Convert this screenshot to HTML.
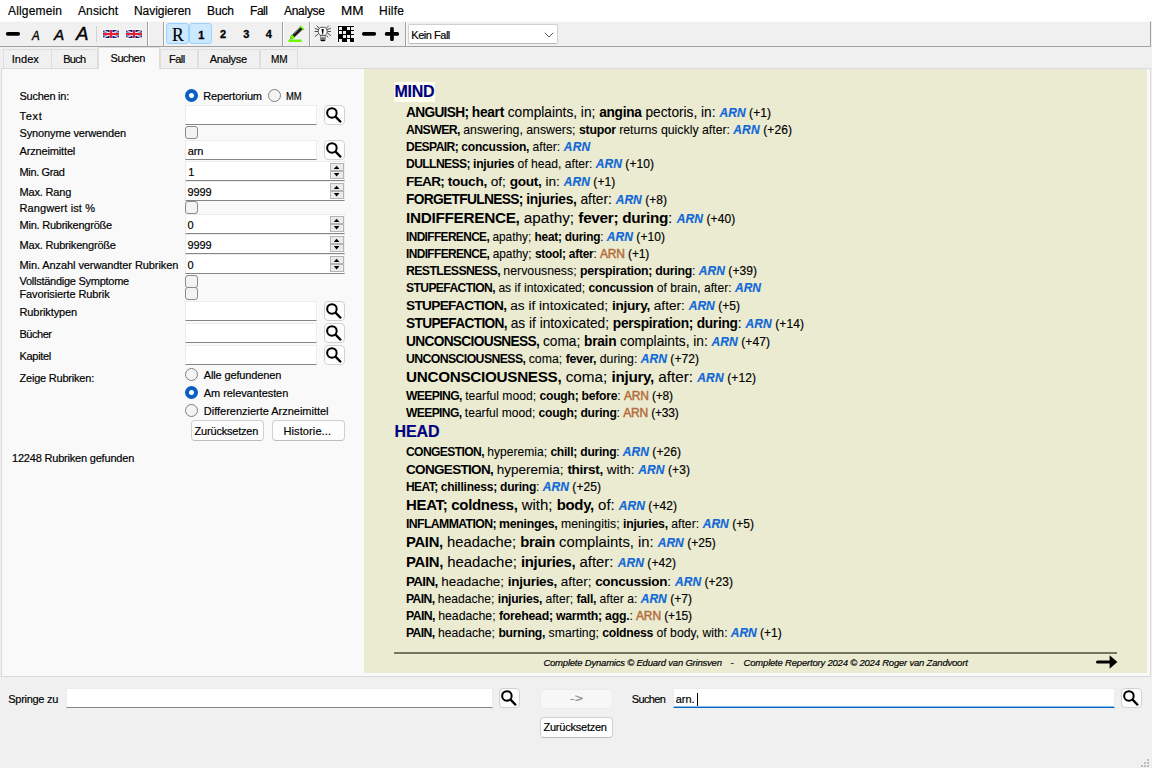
<!DOCTYPE html>
<html lang="de"><head><meta charset="utf-8"><title>Complete Dynamics</title>
<style>
*{box-sizing:border-box;margin:0;padding:0}
html,body{width:1152px;height:768px;overflow:hidden;background:#f0f0f0}
body{position:relative;font-family:"Liberation Sans",sans-serif;font-size:11px;color:#000}
div,span,svg{position:absolute}
b{font-weight:bold}
.t{white-space:pre;line-height:20px;height:20px;z-index:5;transform-origin:0 50%;-webkit-text-stroke:0.18px currentColor}
.t span,.t b{position:static}
.u{letter-spacing:-.045em}
.r{-webkit-text-stroke:0.08px currentColor}
.r b{letter-spacing:-.02em;-webkit-text-stroke:0}
.r .u{letter-spacing:-.05em}
#menu{left:0;top:0;width:1152px;height:21px;background:#fff}
#tb{left:0;top:21px;width:1151px;height:26px;background:#f0f0f0;border-bottom:1px solid #a0a0a0;border-right:1px solid #a0a0a0;border-top:1px solid #fafafa}
.vs{width:1px;background:#a0a0a0;top:22px;height:24px}
.vs2{width:1px;background:#fff;top:22px;height:24px}
.ls{width:1px;background:#d2d2d2;top:26px;height:16px}
.hb{top:23px;height:21px;width:22px;background:#cce8ff;border:1px solid #9ad2ff;border-radius:3px}
.bar{background:#000;border-radius:2px}
.fl{top:30px;width:16px;height:8px;border-radius:1.5px;overflow:hidden;box-shadow:0 0 0 1px #fafaf6}
#combo{left:408px;top:24px;width:149.5px;height:20px;background:#fff;border:1px solid #d0d0d0;border-bottom-color:#b8b8b8;border-radius:2px}
.tab{top:49px;height:19px;background:#f0f0f0;border:1px solid #dedede;border-bottom:none}
.tab.sel{top:47px;height:22px;background:#f9f9f9;z-index:3}
#pane{left:1px;top:68px;width:1149.5px;height:609px;background:#f9f9f9;border:1px solid #dadada}
#rp{left:364px;top:69px;width:783px;height:603.5px;background:#ebebd2}
#hl{left:394px;top:82px;width:41px;height:20px;background:#fffff0}
#hr{left:394px;top:652px;width:723px;height:2px;background:#74745f}
.in{background:#fff;border:1px solid #ececec;border-bottom:1px solid #868686}
.inf{background:#fff;border:1px solid #ececec;border-bottom:1px solid #0067c0;box-shadow:inset 0 -1px 0 #8fbbe4}
.sb{width:21px;height:20px;background:#fdfdfd;border:1px solid #d2d2d2;border-radius:4px}
.sb svg{left:-1px;top:-1px}
.spin{left:185px;width:160px;height:20px;background:#fff;border:1px solid #ececec;border-bottom:1px solid #868686}
.sa{left:144px;width:14px;height:8px;background:#ebebeb;border:1px solid #b4b4b4}
.sa svg{left:-1px;top:-1px}
.rd{width:13px;height:13px;border-radius:50%;border:1px solid #808080;background:#f4f4f4}
.rd.on{border:4px solid #0a5fc2;background:#fff}
.ck{width:13px;height:13px;border-radius:3px;border:1px solid #8a8a8a;background:#f3f3f3}
.btn{background:#fdfdfd;border:1px solid #d0d0d0;border-bottom-color:#bcbcbc;border-radius:4px}
.btnd{background:#f7f7f7;border:1px solid #ececec;border-radius:4px}
</style></head>
<body>
<div id="menu"></div>
<div id="tb"></div>
<svg width="410" height="26" viewBox="0 0 410 26" style="left:0;top:21px"><rect x="5.9" y="11.1" width="14.1" height="3.7" rx="1.7" fill="#000"/><rect x="362" y="11.1" width="14.1" height="3.7" rx="1.7" fill="#000"/><rect x="384.9" y="11.1" width="14.1" height="3.7" rx="1.5" fill="#000"/><rect x="390.1" y="6" width="3.7" height="14" rx="1.5" fill="#000"/></svg>
<div class="ls" style="left:96px"></div>
<div class="fl" style="left:103px"><svg width="16" height="8" viewBox="0 0 60 30" preserveAspectRatio="none"><rect width="60" height="30" fill="#00207f"/><path d="M0 0 L60 30 M60 0 L0 30" stroke="#fff" stroke-width="5"/><path d="M0 0 L60 30 M60 0 L0 30" stroke="#e0344c" stroke-width="1.8"/><path d="M30 0 V30 M0 15 H60" stroke="#fff" stroke-width="10.5"/><path d="M30 0 V30" stroke="#e2203a" stroke-width="7.6"/><path d="M0 15 H60" stroke="#e2203a" stroke-width="7.6"/></svg></div>
<div class="fl" style="left:126px"><svg width="16" height="8" viewBox="0 0 60 30" preserveAspectRatio="none"><rect width="60" height="30" fill="#00207f"/><path d="M0 0 L60 30 M60 0 L0 30" stroke="#fff" stroke-width="5"/><path d="M0 0 L60 30 M60 0 L0 30" stroke="#e0344c" stroke-width="1.8"/><path d="M30 0 V30 M0 15 H60" stroke="#fff" stroke-width="10.5"/><path d="M30 0 V30" stroke="#e2203a" stroke-width="7.6"/><path d="M0 15 H60" stroke="#e2203a" stroke-width="7.6"/></svg></div>
<div class="vs" style="left:147px"></div><div class="vs2" style="left:148px"></div>
<div class="vs" style="left:163px"></div><div class="vs2" style="left:164px"></div>
<div class="hb" style="left:166px;width:22.5px"></div><div class="hb" style="left:189px;width:23px"></div>
<div class="vs" style="left:282px"></div><div class="vs2" style="left:283px"></div>
<div style="left:284px;top:23px;width:24px;height:22px"><svg width="24" height="22" viewBox="0 0 24 22"><rect x="4.3" y="16.5" width="13.5" height="2.4" rx="1.2" fill="#6af800"/><path d="M6.0 16.5 L6.8 13.6 L8.9 15.7 Z" fill="#6b5a78"/><path d="M8.2 14.1 L17.9 4.7" stroke="#1b1b1b" stroke-width="3.5"/><path d="M7.6 13.0 L17.0 3.9" stroke="#c9c9c9" stroke-width="0.9" stroke-dasharray="0.9 0.7"/><path d="M7.0 15.3 L9.4 12.9" stroke="#6af800" stroke-width="3.7"/><path d="M16.5 3.3 L19.7 6.5" stroke="#6af800" stroke-width="1.7" stroke-linecap="round"/></svg></div>
<div class="vs" style="left:309px"></div><div class="vs2" style="left:310px"></div>
<div style="left:314px;top:25px;width:18px;height:18px"><svg width="18" height="18" viewBox="0 0 18 18"><g stroke="#2a2a2a" stroke-width="0.85" stroke-linecap="round"><path d="M3 1 L5.4 3.4 M1.2 3.5 L4.4 4.8 M1 6.5 H3.7 M1.2 11.4 L4 9 M14.5 1 L12.4 3.1 M16.5 3.3 L13.5 4.5 M16.5 6.5 H14 M16.5 10.5 L13.6 8.1 M13 11 L13.7 12"/></g><path d="M6.8 2.3 H10.7 C12.4 3 13.2 4.6 13.2 6.3 C13.2 8.2 12.2 9.4 11.4 10.3 H6.1 C5.3 9.4 4.3 8.2 4.3 6.3 C4.3 4.6 5.1 3 6.8 2.3 Z" fill="#fdfdfd" stroke="#2a2a2a" stroke-width="0.8"/><path d="M7.5 4 H9.8 L9 9.6 H8.4 Z" fill="#000"/><rect x="6.2" y="10.7" width="5.4" height="1.4" fill="#fff" stroke="#333" stroke-width="0.5"/><rect x="6.2" y="12.3" width="5.4" height="2.5" fill="#858585"/><path d="M6.2 13.5 H11.6" stroke="#6c6c6c" stroke-width="0.6"/><path d="M6.3 14.7 H11.5 C11.5 15.7 10.2 16.3 8.9 16.3 C7.6 16.3 6.3 15.7 6.3 14.7 Z" fill="#000"/></svg></div>
<div style="left:337px;top:25px;width:18px;height:18px"><svg width="18" height="18" viewBox="0 0 18 18"><rect width="18" height="18" rx="1" fill="#fbfbfb"/><rect x="1" y="1" width="16" height="16" fill="#000"/><rect x="2" y="2" width="3" height="3" fill="#f1f1f1"/><rect x="10" y="2" width="3" height="3" fill="#f1f1f1"/><rect x="2" y="6" width="3" height="3" fill="#f1f1f1"/><rect x="6" y="6" width="3" height="3" fill="#f1f1f1"/><rect x="6" y="10" width="3" height="3" fill="#f1f1f1"/><rect x="10" y="10" width="3" height="3" fill="#f1f1f1"/><rect x="14" y="2" width="4" height="3" fill="#f1f1f1"/><rect x="14" y="6" width="4" height="3" fill="#f1f1f1"/><rect x="14" y="10" width="4" height="3" fill="#f1f1f1"/><rect x="2" y="14" width="3" height="4" fill="#f1f1f1"/><rect x="10" y="14" width="3" height="4" fill="#f1f1f1"/></svg></div>
<div class="vs" style="left:405px"></div><div class="vs2" style="left:406px"></div>
<div id="combo"><svg width="10" height="6" viewBox="0 0 10 6" style="left:135px;top:7px"><path d="M0.8 0.8 L5 5 L9.2 0.8" fill="none" stroke="#555" stroke-width="1"/></svg></div>
<div class="tab" style="left:3px;width:48.5px"></div>
<div class="tab" style="left:51px;width:47px"></div>
<div class="tab sel" style="left:97.5px;width:62.5px"></div>
<div class="tab" style="left:159.5px;width:38.5px"></div>
<div class="tab" style="left:197.5px;width:62.5px"></div>
<div class="tab" style="left:259.5px;width:38.5px"></div>
<div id="pane"></div>
<div id="rp"></div><div id="hl"></div><div id="hr"></div>
<svg width="22" height="16" viewBox="0 0 22 16" style="left:1096px;top:654.4px"><path d="M1.5 8 H15" stroke="#000" stroke-width="3" stroke-linecap="round"/><path d="M13.6 1.2 L21.4 8 L13.6 14.8 Z" fill="#000"/></svg>
<div class="rd on" style="left:185px;top:89px"></div>
<div class="rd" style="left:268px;top:89px"></div>
<div class="in" style="left:185px;top:105px;width:132px;height:20px"></div>
<div class="sb" style="left:324px;top:105px"><svg width="21" height="20" viewBox="0 0 21 20"><circle cx="7.9" cy="7.9" r="4.75" fill="none" stroke="#000" stroke-width="2"/><path d="M11.3 11.4 L17 17.2" stroke="#000" stroke-width="2.3" stroke-linecap="butt"/></svg></div>
<div class="ck" style="left:185px;top:126px"></div>
<div class="in" style="left:185px;top:140px;width:132px;height:20px"></div>
<div class="sb" style="left:324px;top:140px"><svg width="21" height="20" viewBox="0 0 21 20"><circle cx="7.9" cy="7.9" r="4.75" fill="none" stroke="#000" stroke-width="2"/><path d="M11.3 11.4 L17 17.2" stroke="#000" stroke-width="2.3" stroke-linecap="butt"/></svg></div>
<div class="spin" style="top:161px"><div class="sa" style="top:1px"><svg width="14" height="8" viewBox="0 0 14 8"><path d="M3.8 6 L6.6 2.7 L9.4 6 Z" fill="#000"/></svg></div><div class="sa" style="top:9px"><svg width="14" height="8" viewBox="0 0 14 8"><path d="M3.8 2.1 L9.4 2.1 L6.6 5.4 Z" fill="#000"/></svg></div></div>
<div class="spin" style="top:181px"><div class="sa" style="top:1px"><svg width="14" height="8" viewBox="0 0 14 8"><path d="M3.8 6 L6.6 2.7 L9.4 6 Z" fill="#000"/></svg></div><div class="sa" style="top:9px"><svg width="14" height="8" viewBox="0 0 14 8"><path d="M3.8 2.1 L9.4 2.1 L6.6 5.4 Z" fill="#000"/></svg></div></div>
<div class="ck" style="left:185px;top:201px"></div>
<div class="spin" style="top:214px"><div class="sa" style="top:1px"><svg width="14" height="8" viewBox="0 0 14 8"><path d="M3.8 6 L6.6 2.7 L9.4 6 Z" fill="#000"/></svg></div><div class="sa" style="top:9px"><svg width="14" height="8" viewBox="0 0 14 8"><path d="M3.8 2.1 L9.4 2.1 L6.6 5.4 Z" fill="#000"/></svg></div></div>
<div class="spin" style="top:234px"><div class="sa" style="top:1px"><svg width="14" height="8" viewBox="0 0 14 8"><path d="M3.8 6 L6.6 2.7 L9.4 6 Z" fill="#000"/></svg></div><div class="sa" style="top:9px"><svg width="14" height="8" viewBox="0 0 14 8"><path d="M3.8 2.1 L9.4 2.1 L6.6 5.4 Z" fill="#000"/></svg></div></div>
<div class="spin" style="top:254px"><div class="sa" style="top:1px"><svg width="14" height="8" viewBox="0 0 14 8"><path d="M3.8 6 L6.6 2.7 L9.4 6 Z" fill="#000"/></svg></div><div class="sa" style="top:9px"><svg width="14" height="8" viewBox="0 0 14 8"><path d="M3.8 2.1 L9.4 2.1 L6.6 5.4 Z" fill="#000"/></svg></div></div>
<div class="ck" style="left:185px;top:274.5px"></div>
<div class="ck" style="left:185px;top:287px"></div>
<div class="in" style="left:185px;top:301px;width:132px;height:20px"></div>
<div class="sb" style="left:324px;top:301px"><svg width="21" height="20" viewBox="0 0 21 20"><circle cx="7.9" cy="7.9" r="4.75" fill="none" stroke="#000" stroke-width="2"/><path d="M11.3 11.4 L17 17.2" stroke="#000" stroke-width="2.3" stroke-linecap="butt"/></svg></div>
<div class="in" style="left:185px;top:323px;width:132px;height:20px"></div>
<div class="sb" style="left:324px;top:323px"><svg width="21" height="20" viewBox="0 0 21 20"><circle cx="7.9" cy="7.9" r="4.75" fill="none" stroke="#000" stroke-width="2"/><path d="M11.3 11.4 L17 17.2" stroke="#000" stroke-width="2.3" stroke-linecap="butt"/></svg></div>
<div class="in" style="left:185px;top:345px;width:132px;height:20px"></div>
<div class="sb" style="left:324px;top:345px"><svg width="21" height="20" viewBox="0 0 21 20"><circle cx="7.9" cy="7.9" r="4.75" fill="none" stroke="#000" stroke-width="2"/><path d="M11.3 11.4 L17 17.2" stroke="#000" stroke-width="2.3" stroke-linecap="butt"/></svg></div>
<div class="rd" style="left:185px;top:368px"></div>
<div class="rd on" style="left:185px;top:386px"></div>
<div class="rd" style="left:185px;top:404px"></div>
<div class="btn" style="left:191px;top:420.3px;width:73px;height:20.5px"></div>
<div class="btn" style="left:272px;top:420.3px;width:73px;height:20.5px"></div>
<div class="in" style="left:65.5px;top:688px;width:427px;height:20px"></div>
<div class="sb" style="left:499px;top:688px"><svg width="21" height="20" viewBox="0 0 21 20"><circle cx="7.9" cy="7.9" r="4.75" fill="none" stroke="#000" stroke-width="2"/><path d="M11.3 11.4 L17 17.2" stroke="#000" stroke-width="2.3" stroke-linecap="butt"/></svg></div>
<div class="btnd" style="left:540px;top:688.5px;width:72.5px;height:20.5px"></div>
<div class="inf" style="left:673px;top:688px;width:442px;height:20px"></div>
<div class="sb" style="left:1121px;top:688px"><svg width="21" height="20" viewBox="0 0 21 20"><circle cx="7.9" cy="7.9" r="4.75" fill="none" stroke="#000" stroke-width="2"/><path d="M11.3 11.4 L17 17.2" stroke="#000" stroke-width="2.3" stroke-linecap="butt"/></svg></div>
<div style="left:696.5px;top:693px;width:1px;height:13px;background:#000"></div>
<div class="btn" style="left:540px;top:717.3px;width:72.5px;height:20.5px"></div>
<div style="left:1147px;top:759px;width:2px;height:2px;background:#bdbdbd"></div>
<div style="left:1144px;top:762px;width:2px;height:2px;background:#bdbdbd"></div>
<div style="left:1147px;top:762px;width:2px;height:2px;background:#bdbdbd"></div>
<div style="left:1141px;top:765px;width:2px;height:2px;background:#bdbdbd"></div>
<div style="left:1144px;top:765px;width:2px;height:2px;background:#bdbdbd"></div>
<div style="left:1147px;top:765px;width:2px;height:2px;background:#bdbdbd"></div>
<div class="t" style="left:8px;top:1.32px;font-size:12.00px;letter-spacing:0.162px;">Allgemein</div>
<div class="t" style="left:78px;top:1.32px;font-size:12.00px;letter-spacing:0.108px;">Ansicht</div>
<div class="t" style="left:134px;top:1.32px;font-size:12.00px;letter-spacing:-0.042px;">Navigieren</div>
<div class="t" style="left:207px;top:1.32px;font-size:12.00px;letter-spacing:-0.120px;">Buch</div>
<div class="t" style="left:250px;top:1.32px;font-size:12.00px;letter-spacing:-0.448px;">Fall</div>
<div class="t" style="left:284px;top:1.32px;font-size:12.00px;letter-spacing:-0.283px;">Analyse</div>
<div class="t" style="left:341px;top:1.32px;font-size:12.00px;transform:scaleX(1.1250);">MM</div>
<div class="t" style="left:379px;top:1.32px;font-size:12.00px;letter-spacing:0.247px;">Hilfe</div>
<div class="t" style="left:11.7px;top:48.60px;font-size:11.00px;letter-spacing:0.069px;">Index</div>
<div class="t" style="left:63.3px;top:48.60px;font-size:11.00px;letter-spacing:-0.761px;">Buch</div>
<div class="t" style="left:110.6px;top:47.60px;font-size:11.00px;letter-spacing:-0.523px;">Suchen</div>
<div class="t" style="left:168.9px;top:48.60px;font-size:11.00px;letter-spacing:-0.442px;">Fall</div>
<div class="t" style="left:209.7px;top:48.60px;font-size:11.00px;letter-spacing:-0.272px;">Analyse</div>
<div class="t" style="left:270.8px;top:48.60px;font-size:11.00px;transform:scaleX(0.9112);">MM</div>
<div class="t" style="left:411.3px;top:24.81px;font-size:11.00px;letter-spacing:-0.475px;">Kein Fall</div>
<div class="t" style="left:19.5px;top:85.81px;font-size:11.00px;letter-spacing:-0.254px;">Suchen in:</div>
<div class="t" style="left:19.5px;top:105.81px;font-size:11.00px;letter-spacing:0.674px;">Text</div>
<div class="t" style="left:19.5px;top:123.01px;font-size:11.00px;letter-spacing:-0.126px;">Synonyme verwenden</div>
<div class="t" style="left:19.5px;top:140.81px;font-size:11.00px;letter-spacing:-0.151px;">Arzneimittel</div>
<div class="t" style="left:19.5px;top:161.70px;font-size:11.00px;letter-spacing:-0.350px;">Min. Grad</div>
<div class="t" style="left:19.5px;top:182.01px;font-size:11.00px;letter-spacing:-0.176px;">Max. Rang</div>
<div class="t" style="left:19.5px;top:198.01px;font-size:11.00px;letter-spacing:0.117px;">Rangwert ist %</div>
<div class="t" style="left:19.5px;top:215.01px;font-size:11.00px;letter-spacing:-0.230px;">Min. Rubrikengröße</div>
<div class="t" style="left:19.5px;top:235.01px;font-size:11.00px;letter-spacing:-0.186px;">Max. Rubrikengröße</div>
<div class="t" style="left:19.5px;top:254.81px;font-size:11.00px;letter-spacing:-0.087px;">Min. Anzahl verwandter Rubriken</div>
<div class="t" style="left:19.5px;top:270.81px;font-size:11.00px;letter-spacing:-0.263px;">Vollständige Symptome</div>
<div class="t" style="left:19.5px;top:283.81px;font-size:11.00px;letter-spacing:-0.117px;">Favorisierte Rubrik</div>
<div class="t" style="left:19.5px;top:301.81px;font-size:11.00px;letter-spacing:-0.100px;">Rubriktypen</div>
<div class="t" style="left:19.5px;top:323.81px;font-size:11.00px;letter-spacing:-0.471px;">Bücher</div>
<div class="t" style="left:19.5px;top:345.81px;font-size:11.00px;letter-spacing:-0.308px;">Kapitel</div>
<div class="t" style="left:19.5px;top:367.81px;font-size:11.00px;letter-spacing:-0.211px;">Zeige Rubriken:</div>
<div class="t" style="left:203.3px;top:86.01px;font-size:11.00px;letter-spacing:-0.183px;">Repertorium</div>
<div class="t" style="left:286.3px;top:86.01px;font-size:11.00px;transform:scaleX(0.8566);">MM</div>
<div class="t" style="left:187.7px;top:140.81px;font-size:11.00px;letter-spacing:-0.057px;">arn</div>
<div class="t" style="left:188.3px;top:161.70px;font-size:11.00px;">1</div>
<div class="t" style="left:187.5px;top:181.51px;font-size:11.00px;letter-spacing:-0.159px;">9999</div>
<div class="t" style="left:187.5px;top:214.81px;font-size:11.00px;">0</div>
<div class="t" style="left:187.5px;top:234.81px;font-size:11.00px;letter-spacing:-0.159px;">9999</div>
<div class="t" style="left:187.5px;top:254.70px;font-size:11.00px;">0</div>
<div class="t" style="left:203.8px;top:364.81px;font-size:11.00px;letter-spacing:-0.145px;">Alle gefundenen</div>
<div class="t" style="left:203.8px;top:382.81px;font-size:11.00px;letter-spacing:-0.074px;">Am relevantesten</div>
<div class="t" style="left:203.8px;top:400.81px;font-size:11.00px;letter-spacing:-0.016px;">Differenzierte Arzneimittel</div>
<div class="t" style="left:194.6px;top:420.81px;font-size:11.00px;letter-spacing:-0.203px;">Zurücksetzen</div>
<div class="t" style="left:283.5px;top:420.81px;font-size:11.00px;letter-spacing:0.103px;">Historie...</div>
<div class="t" style="left:12px;top:447.81px;font-size:11.00px;letter-spacing:-0.197px;">12248 Rubriken gefunden</div>
<div class="t" style="left:8.3px;top:688.81px;font-size:11.00px;letter-spacing:-0.289px;">Springe zu</div>
<div class="t" style="left:631.7px;top:688.81px;font-size:11.00px;letter-spacing:-0.603px;">Suchen</div>
<div class="t" style="left:675.8px;top:688.81px;font-size:11.00px;letter-spacing:-0.056px;">arn.</div>
<div class="t" style="left:569.5px;top:688.31px;font-size:11.00px;transform:scaleX(1.2879);color:#8a8a8a;">-&gt;</div>
<div class="t" style="left:543.5px;top:717.40px;font-size:11.00px;letter-spacing:-0.231px;">Zurücksetzen</div>
<div class="t" style="left:394.6px;top:81.90px;font-size:16.00px;letter-spacing:-0.297px;color:#000080;font-weight:bold;">MIND</div>
<div class="t" style="left:394.6px;top:421.81px;font-size:16.00px;letter-spacing:-0.150px;color:#000080;font-weight:bold;">HEAD</div>
<div class="t r" style="left:406px;top:102.82px;font-size:13.71px;"><b><span class="u">ANGUISH;</span> heart</b> complaints, in; <b>angina</b> pectoris, in:&nbsp;</div>
<div class="t" style="left:719.4px;top:102.82px;font-size:12.00px;letter-spacing:0.098px;"><b style="color:#1268d6;font-style:italic">ARN</b> (+1)</div>
<div class="t r" style="left:406px;top:120.21px;font-size:12.32px;"><b><span class="u">ANSWER,</span></b> answering, answers; <b>stupor</b> returns quickly after:&nbsp;</div>
<div class="t" style="left:733.3px;top:120.21px;font-size:12.00px;letter-spacing:0.124px;"><b style="color:#1268d6;font-style:italic">ARN</b> (+26)</div>
<div class="t r" style="left:406px;top:137.00px;font-size:12.12px;"><b><span class="u">DESPAIR;</span> concussion,</b> after:&nbsp;</div>
<div class="t" style="left:563.7px;top:137.00px;font-size:12.00px;letter-spacing:0.297px;"><b style="color:#1268d6;font-style:italic">ARN</b></div>
<div class="t r" style="left:406px;top:153.82px;font-size:12.13px;"><b><span class="u">DULLNESS;</span> injuries</b> of head, after:&nbsp;</div>
<div class="t" style="left:595.7px;top:153.82px;font-size:12.00px;letter-spacing:0.075px;"><b style="color:#1268d6;font-style:italic">ARN</b> (+10)</div>
<div class="t r" style="left:406px;top:171.82px;font-size:13.64px;"><b><span class="u">FEAR;</span> touch,</b> of; <b>gout,</b> in:&nbsp;</div>
<div class="t" style="left:563.7px;top:171.82px;font-size:12.00px;letter-spacing:0.084px;"><b style="color:#1268d6;font-style:italic">ARN</b> (+1)</div>
<div class="t r" style="left:406px;top:189.71px;font-size:13.79px;"><b><span class="u">FORGETFULNESS;</span> injuries,</b> after:&nbsp;</div>
<div class="t" style="left:615.7px;top:189.71px;font-size:12.00px;letter-spacing:0.039px;"><b style="color:#1268d6;font-style:italic">ARN</b> (+8)</div>
<div class="t r" style="left:406px;top:208.00px;font-size:15.34px;"><b>INDIFFERENCE,</b> apathy; <b>fever; during</b>:&nbsp;</div>
<div class="t" style="left:676.7px;top:209.00px;font-size:12.00px;letter-spacing:0.112px;"><b style="color:#1268d6;font-style:italic">ARN</b> (+40)</div>
<div class="t r" style="left:406px;top:226.71px;font-size:11.85px;"><b><span class="u">INDIFFERENCE,</span></b> apathy; <b>heat; during</b>:&nbsp;</div>
<div class="t" style="left:606.7px;top:226.71px;font-size:12.00px;letter-spacing:0.075px;"><b style="color:#1268d6;font-style:italic">ARN</b> (+10)</div>
<div class="t r" style="left:406px;top:244.00px;font-size:11.89px;"><b><span class="u">INDIFFERENCE,</span></b> apathy; <b>stool; after</b>:&nbsp;</div>
<div class="t" style="left:600px;top:244.00px;font-size:12.00px;letter-spacing:-0.153px;"><span style="color:#b36c39;-webkit-text-stroke:0.45px #b36c39">ARN</span> (+1)</div>
<div class="t r" style="left:406px;top:260.71px;font-size:12.32px;"><b><span class="u">RESTLESSNESS,</span></b> nervousness; <b>perspiration; during</b>:&nbsp;</div>
<div class="t" style="left:698.7px;top:260.71px;font-size:12.00px;letter-spacing:0.075px;"><b style="color:#1268d6;font-style:italic">ARN</b> (+39)</div>
<div class="t r" style="left:406px;top:277.71px;font-size:12.12px;"><b><span class="u">STUPEFACTION,</span></b> as if intoxicated; <b>concussion</b> of brain, after:&nbsp;</div>
<div class="t" style="left:735px;top:277.71px;font-size:12.00px;"><b style="color:#1268d6;font-style:italic">ARN</b></div>
<div class="t r" style="left:406px;top:295.71px;font-size:13.66px;"><b><span class="u">STUPEFACTION,</span></b> as if intoxicated; <b>injury,</b> after:&nbsp;</div>
<div class="t" style="left:688.7px;top:295.71px;font-size:12.00px;letter-spacing:0.039px;"><b style="color:#1268d6;font-style:italic">ARN</b> (+5)</div>
<div class="t r" style="left:406px;top:313.71px;font-size:13.73px;"><b><span class="u">STUPEFACTION,</span></b> as if intoxicated; <b>perspiration; during</b>:&nbsp;</div>
<div class="t" style="left:745.6px;top:313.71px;font-size:12.00px;letter-spacing:0.075px;"><b style="color:#1268d6;font-style:italic">ARN</b> (+14)</div>
<div class="t r" style="left:406px;top:331.71px;font-size:13.72px;"><b><span class="u">UNCONSCIOUSNESS,</span></b> coma; <b>brain</b> complaints, in:&nbsp;</div>
<div class="t" style="left:711.5px;top:331.71px;font-size:12.00px;letter-spacing:0.102px;"><b style="color:#1268d6;font-style:italic">ARN</b> (+47)</div>
<div class="t r" style="left:406px;top:348.71px;font-size:12.31px;"><b><span class="u">UNCONSCIOUSNESS,</span></b> coma; <b>fever,</b> during:&nbsp;</div>
<div class="t" style="left:640.7px;top:348.71px;font-size:12.00px;letter-spacing:0.075px;"><b style="color:#1268d6;font-style:italic">ARN</b> (+72)</div>
<div class="t r" style="left:406px;top:366.71px;font-size:15.28px;"><b>UNCONSCIOUSNESS,</b> coma; <b>injury,</b> after:&nbsp;</div>
<div class="t" style="left:697.3px;top:367.71px;font-size:12.00px;letter-spacing:0.124px;"><b style="color:#1268d6;font-style:italic">ARN</b> (+12)</div>
<div class="t r" style="left:406px;top:385.71px;font-size:12.15px;"><b><span class="u">WEEPING,</span></b> tearful mood; <b>cough; before</b>:&nbsp;</div>
<div class="t" style="left:624px;top:385.71px;font-size:12.00px;letter-spacing:-0.193px;"><span style="color:#b36c39;-webkit-text-stroke:0.45px #b36c39">ARN</span> (+8)</div>
<div class="t r" style="left:406px;top:402.71px;font-size:12.07px;"><b><span class="u">WEEPING,</span></b> tearful mood; <b>cough; during</b>:&nbsp;</div>
<div class="t" style="left:623.3px;top:402.71px;font-size:12.00px;letter-spacing:-0.205px;"><span style="color:#b36c39;-webkit-text-stroke:0.45px #b36c39">ARN</span> (+33)</div>
<div class="t r" style="left:406px;top:442.00px;font-size:12.08px;"><b><span class="u">CONGESTION,</span></b> hyperemia; <b>chill; during</b>:&nbsp;</div>
<div class="t" style="left:622.7px;top:442.00px;font-size:12.00px;letter-spacing:0.075px;"><b style="color:#1268d6;font-style:italic">ARN</b> (+26)</div>
<div class="t r" style="left:406px;top:459.71px;font-size:13.51px;"><b><span class="u">CONGESTION,</span></b> hyperemia; <b>thirst,</b> with:&nbsp;</div>
<div class="t" style="left:638.3px;top:459.71px;font-size:12.00px;letter-spacing:0.098px;"><b style="color:#1268d6;font-style:italic">ARN</b> (+3)</div>
<div class="t r" style="left:406px;top:476.71px;font-size:12.05px;"><b><span class="u">HEAT;</span> chilliness; during</b>:&nbsp;</div>
<div class="t" style="left:542.7px;top:476.71px;font-size:12.00px;letter-spacing:0.075px;"><b style="color:#1268d6;font-style:italic">ARN</b> (+25)</div>
<div class="t r" style="left:406px;top:495.00px;font-size:14.96px;"><b>HEAT; coldness,</b> with; <b>body,</b> of:&nbsp;</div>
<div class="t" style="left:618.7px;top:496.00px;font-size:12.00px;letter-spacing:0.075px;"><b style="color:#1268d6;font-style:italic">ARN</b> (+42)</div>
<div class="t r" style="left:406px;top:514.00px;font-size:12.28px;"><b><span class="u">INFLAMMATION;</span> meninges,</b> meningitis; <b>injuries,</b> after:&nbsp;</div>
<div class="t" style="left:702.7px;top:514.00px;font-size:12.00px;letter-spacing:0.039px;"><b style="color:#1268d6;font-style:italic">ARN</b> (+5)</div>
<div class="t r" style="left:406px;top:532.00px;font-size:14.80px;"><b>PAIN,</b> headache; <b>brain</b> complaints, in:&nbsp;</div>
<div class="t" style="left:657.7px;top:533.00px;font-size:12.00px;letter-spacing:0.040px;"><b style="color:#1268d6;font-style:italic">ARN</b> (+25)</div>
<div class="t r" style="left:406px;top:552.00px;font-size:14.90px;"><b>PAIN,</b> headache; <b>injuries,</b> after:&nbsp;</div>
<div class="t" style="left:617.7px;top:553.00px;font-size:12.00px;letter-spacing:0.075px;"><b style="color:#1268d6;font-style:italic">ARN</b> (+42)</div>
<div class="t r" style="left:406px;top:571.71px;font-size:13.46px;"><b><span class="u">PAIN,</span></b> headache; <b>injuries,</b> after; <b>concussion</b>:&nbsp;</div>
<div class="t" style="left:675px;top:571.71px;font-size:12.00px;letter-spacing:0.040px;"><b style="color:#1268d6;font-style:italic">ARN</b> (+23)</div>
<div class="t r" style="left:406px;top:588.71px;font-size:12.14px;"><b><span class="u">PAIN,</span></b> headache; <b>injuries,</b> after; <b>fall,</b> after a:&nbsp;</div>
<div class="t" style="left:640.7px;top:588.71px;font-size:12.00px;letter-spacing:0.039px;"><b style="color:#1268d6;font-style:italic">ARN</b> (+7)</div>
<div class="t r" style="left:406px;top:605.71px;font-size:12.29px;"><b><span class="u">PAIN,</span></b> headache; <b>forehead; warmth; agg.</b>:&nbsp;</div>
<div class="t" style="left:636px;top:605.71px;font-size:12.00px;letter-spacing:-0.129px;"><span style="color:#b36c39;-webkit-text-stroke:0.45px #b36c39">ARN</span> (+15)</div>
<div class="t r" style="left:406px;top:622.71px;font-size:12.21px;"><b><span class="u">PAIN,</span></b> headache; <b>burning,</b> smarting; <b>coldness</b> of body, with:&nbsp;</div>
<div class="t" style="left:730.8px;top:622.71px;font-size:12.00px;letter-spacing:-0.017px;"><b style="color:#1268d6;font-style:italic">ARN</b> (+1)</div>
<div class="t" style="left:543.4px;top:652.71px;font-size:9.50px;letter-spacing:-0.209px;font-style:italic;">Complete Dynamics © Eduard van Grinsven</div>
<div class="t" style="left:730.5px;top:652.71px;font-size:9.50px;font-style:italic;">-</div>
<div class="t" style="left:743.6px;top:652.71px;font-size:9.50px;letter-spacing:-0.202px;font-style:italic;">Complete Repertory 2024 © 2024 Roger van Zandvoort</div>
<div class="t" style="left:172.3px;top:25.00px;font-size:18.30px;transform:scaleX(0.9670);font-family:'Liberation Serif',serif;">R</div>
<div class="t" style="left:198.3px;top:24.81px;font-size:11.00px;font-weight:bold;-webkit-text-stroke:0.3px #000;">1</div>
<div class="t" style="left:219.9px;top:23.90px;font-size:11.00px;font-weight:bold;-webkit-text-stroke:0.3px #000;">2</div>
<div class="t" style="left:243.2px;top:24.40px;font-size:11.00px;font-weight:bold;-webkit-text-stroke:0.3px #000;">3</div>
<div class="t" style="left:265.8px;top:23.90px;font-size:11.00px;font-weight:bold;-webkit-text-stroke:0.3px #000;">4</div>
<div class="t" style="left:32.1px;top:25.70px;font-size:12.10px;transform:scaleX(0.9532);font-style:italic;-webkit-text-stroke:0.35px #000;">A</div>
<div class="t" style="left:54px;top:24.71px;font-size:14.80px;transform:scaleX(1.0329);font-style:italic;-webkit-text-stroke:0.4px #000;">A</div>
<div class="t" style="left:76px;top:23.71px;font-size:19.10px;transform:scaleX(0.9804);font-style:italic;-webkit-text-stroke:0.45px #000;">A</div>
</body></html>
